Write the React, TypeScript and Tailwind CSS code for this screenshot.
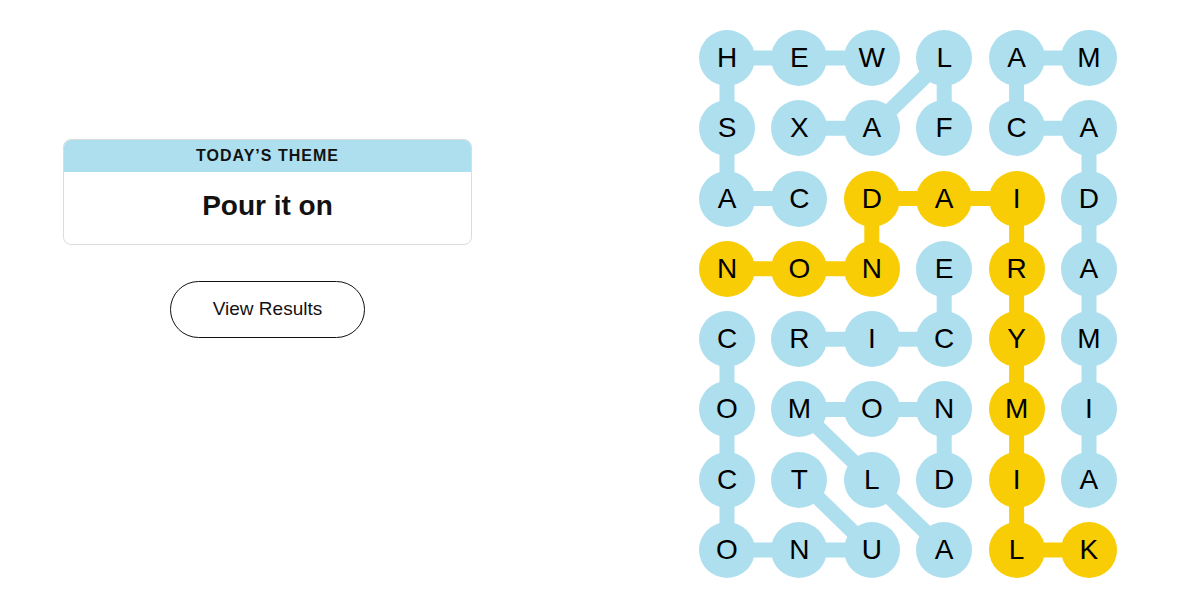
import React from "react";

const LETTERS = [
  "HEWLAM",
  "SXAFCA",
  "ACDAID",
  "NONERA",
  "CRICYM",
  "OMONMI",
  "CTLDIA",
  "ONUALK",
];

const YELLOW = new Set([
  "2,2", "2,3", "2,4", "3,0", "3,1", "3,2", "3,4", "4,4", "5,4", "6,4", "7,4", "7,5",
]);

type Link = [number, number, number, number];

const BLUE_LINKS: Link[] = [
  [0, 0, 0, 1], [0, 1, 0, 2], [0, 0, 1, 0], [1, 0, 2, 0], [2, 0, 2, 1],
  [1, 1, 1, 2], [1, 2, 0, 3], [0, 3, 1, 3], [0, 4, 0, 5], [0, 4, 1, 4],
  [1, 4, 1, 5], [1, 5, 2, 5], [2, 5, 3, 5], [3, 5, 4, 5], [4, 5, 5, 5],
  [5, 5, 6, 5], [3, 3, 4, 3], [4, 1, 4, 2], [4, 2, 4, 3], [4, 0, 5, 0],
  [5, 0, 6, 0], [6, 0, 7, 0], [7, 0, 7, 1], [7, 1, 7, 2], [5, 1, 5, 2],
  [5, 2, 5, 3], [5, 3, 6, 3], [5, 1, 6, 2], [6, 2, 7, 3], [6, 1, 7, 2],
];

const YELLOW_LINKS: Link[] = [
  [2, 2, 2, 3], [2, 3, 2, 4], [2, 2, 3, 2], [3, 2, 3, 1], [3, 1, 3, 0],
  [2, 4, 3, 4], [3, 4, 4, 4], [4, 4, 5, 4], [5, 4, 6, 4], [6, 4, 7, 4],
  [7, 4, 7, 5],
];

const COL = 72.4;
const ROW = 70.286;
const R = 28;

const cx = (c: number) => R + c * COL;
const cy = (r: number) => R + r * ROW;

export default function App() {
  return (
    <div
      className="w-[1182px] h-[606px] bg-white flex justify-between overflow-hidden"
      style={{ fontFamily: '"Liberation Sans", Arial, sans-serif' }}
    >
      {/* Left: theme + results */}
      <div className="pl-[63px] pt-[139px] flex flex-col items-center w-[472px]">
        <div className="w-[409px] h-[106px] rounded-lg border border-[#dcdcdc] overflow-hidden flex flex-col">
          <div className="h-[32px] bg-[#aedfee] flex items-center justify-center">
            <span className="text-[16px] font-bold tracking-[1px] text-[#121212]">TODAY’S THEME</span>
          </div>
          <div className="flex-1 flex items-center justify-center pb-[4px]">
            <span className="text-[28px] font-bold text-[#121212]">Pour it on</span>
          </div>
        </div>
        <button className="mt-[36px] w-[195px] h-[57px] rounded-full border border-[#121212] text-[19px] text-[#121212] bg-white">
          View Results
        </button>
      </div>

      {/* Right: letter board */}
      <div className="pr-[65px] pt-[30px]">
        <div className="relative w-[418px] h-[548px]">
          <svg className="absolute inset-0" width="418" height="548">
            {BLUE_LINKS.map(([r1, c1, r2, c2], i) => (
              <line key={"b" + i} x1={cx(c1)} y1={cy(r1)} x2={cx(c2)} y2={cy(r2)} stroke="#aedfee" strokeWidth={15} />
            ))}
            {YELLOW_LINKS.map(([r1, c1, r2, c2], i) => (
              <line key={"y" + i} x1={cx(c1)} y1={cy(r1)} x2={cx(c2)} y2={cy(r2)} stroke="#f8cd05" strokeWidth={15} />
            ))}
          </svg>
          <div className="relative grid grid-cols-[repeat(6,56px)] gap-x-[16.4px] gap-y-[14.286px]">
            {LETTERS.map((row, r) =>
              row.split("").map((ch, c) => (
                <div
                  key={r + "-" + c}
                  className={`w-[56px] h-[56px] rounded-full flex items-center justify-center text-[28px] text-black ${
                    YELLOW.has(r + "," + c) ? "bg-[#f8cd05]" : "bg-[#aedfee]"
                  }`}
                >
                  {ch}
                </div>
              ))
            )}
          </div>
        </div>
      </div>
    </div>
  );
}
